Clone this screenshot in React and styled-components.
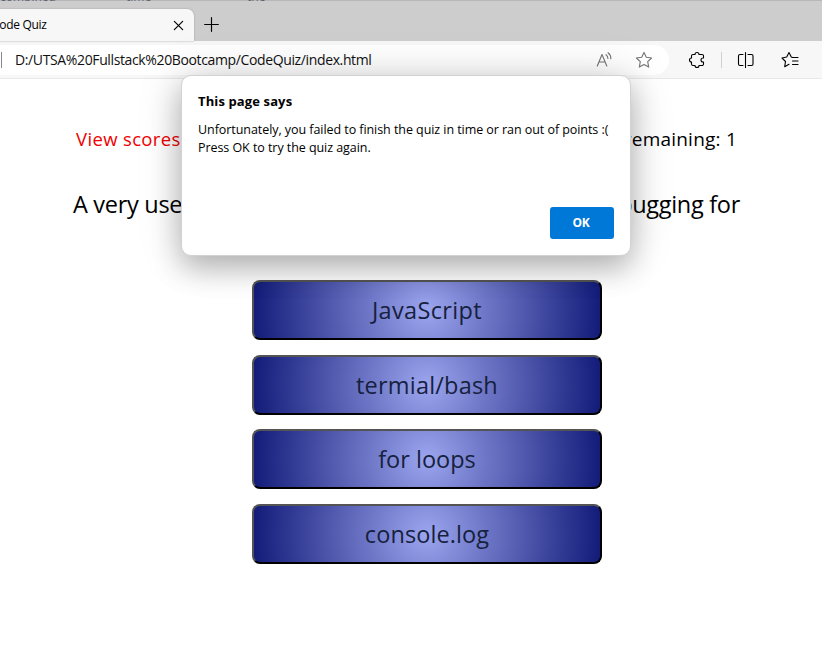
import React from "react";
import styled, { createGlobalStyle } from "styled-components";

const Global = createGlobalStyle`
  * { box-sizing: border-box; }
  body { margin: 0; background: #fff; font-family: "Open Sans", "Noto Sans", sans-serif; color: #000; overflow: hidden; }
  button { font-family: inherit; }
`;
const Screen = styled.div`position: relative; width: 822px; height: 656px; overflow: hidden;`;
const TabStrip = styled.div`position: relative; display: flex; height: 41px; padding-top: 9px; background: #cdcdcd; border-top: 1px solid #b7b7b7;`;
const Sliver = styled.span`position: absolute; left: ${(p) => p.$x}px; top: -12px; font-size: 12px; line-height: 16px; color: #5d6370; white-space: nowrap;`;
const Tab = styled.div`display: flex; justify-content: space-between; align-items: center; width: 194px; height: 32px; margin-top: -1px; padding: 0 8px 0 0; background: #f7f7f7; border-radius: 0 7px 0 0; box-shadow: 0 0 2px #999;`;
const TabTitle = styled.span`font-size: 12px; letter-spacing: -0.3px; margin: -1px 0 0 -8px; white-space: nowrap;`;
const NewTab = styled.div`display: flex; align-items: center; margin-left: 10px; height: 28px;`;
const Toolbar = styled.div`display: flex; align-items: center; height: 38px; background: #f7f7f7; border-bottom: 1px solid #e8e8e8;`;
const AddressBar = styled.div`display: flex; align-items: center; width: 669px; height: 30px; background: #fff; border-radius: 0 15px 15px 0; color: #757575;`;
const Divider = styled.i`width: 1px; height: 16px; background: ${(p) => p.$color};`;
const UrlDivider = styled(Divider)`margin-left: 1px;`;
const Url = styled.span`margin-left: 13px; flex: 1; color: #111; font-size: 14px; letter-spacing: -0.37px; white-space: nowrap;`;
const AddressIcons = styled.div`display: flex; gap: 21px; margin-right: 16px;`;
const Tools = styled.div`display: flex; align-items: center; margin-left: 19px;`;
const ToolIcon = styled.span`display: flex; margin-left: ${(p) => p.$gap || 0}px;`;
const Page = styled.main`display: flex; flex-direction: column; height: 577px;`;
const StatusRow = styled.header`display: flex; justify-content: space-between; padding: 47px 85px 0 76px; font-size: 19px; line-height: 26px; white-space: nowrap;`;
const Scores = styled.span`color: #f00000; font-size: 18.5px; letter-spacing: 0.35px;`;
const Timer = styled.span`letter-spacing: 0.22px;`;
const Question = styled.h1`display: flex; justify-content: space-between; margin: 35px 82px 0 73px; font-size: 23.5px; line-height: 34px; font-weight: 400; white-space: nowrap; letter-spacing: -0.3px;`;
const Answers = styled.div`display: flex; flex-direction: column; gap: 14.7px; width: 350px; margin: 59px 0 0 252px;`;
const Answer = styled.button`height: 60px; padding: 0; border: 2px outset #000; border-radius: 8px; background: radial-gradient(circle, #9ca5ee, #121b78); font-size: 23.5px; color: #16213e; letter-spacing: ${(p) => p.$track}px;`;
const Dialog = styled.section`position: absolute; left: 181px; top: 75px; display: flex; flex-direction: column; width: 450px; height: 181px; padding: 15px 16px 16px; border: 1px solid #d2d2d2; border-radius: 10px; background: #fff; box-shadow: 0 13px 29px rgba(0,0,0,.24), 0 0 46px rgba(0,0,0,.15);`;
const DialogTitle = styled.h2`margin: 0 0 10px; font-size: 13px; line-height: 20px; font-weight: 700; letter-spacing: 0.12px;`;
const Line = styled.p`margin: 0; font-size: 12.5px; line-height: 18px; white-space: nowrap; letter-spacing: -0.06px;`;
const OkButton = styled.button`margin: auto 0 0 auto; width: 64px; height: 32px; padding: 0 2px 1px 0; border: 0; border-radius: 3px; background: #0078d7; color: #fff; font-size: 12px; font-weight: 700; letter-spacing: -0.3px;`;

const Icon = ({ size = 18, children }) => (
  <svg width={size} height={size} viewBox="0 0 18 18" fill="none" stroke="currentColor" strokeWidth="1.1" strokeLinecap="round" strokeLinejoin="round">{children}</svg>
);
const answers = [["JavaScript", 0.35], ["termial/bash", 0.2], ["for loops", 0], ["console.log", 0.1]];

export default function App() {
  return (
    <Screen>
      <Global />
      <TabStrip>
        <Sliver $x={0}>combined</Sliver><Sliver $x={126}>time</Sliver><Sliver $x={247}>the</Sliver>
        <Tab><TabTitle>Code Quiz</TabTitle><Icon size={15}><path d="M4 4l10 10M14 4L4 14" strokeWidth="1.4" /></Icon></Tab>
        <NewTab><Icon size={15}><path d="M9 .8v16.4M.8 9h16.4" strokeWidth="1.4" /></Icon></NewTab>
      </TabStrip>
      <Toolbar>
        <AddressBar>
          <UrlDivider $color="#888" />
          <Url>D:/UTSA%20Fullstack%20Bootcamp/CodeQuiz/index.html</Url>
          <AddressIcons>
            <Icon><path d="M1.300 15L6 3.500 10.800 15M3 11h6M10 3.700q2 1.600 1.900 3.800M12 1.800q3 2.200 2.800 6" /></Icon>
            <Icon><path d="M9 1.400l2.300 4.900 5.300.700-3.900 3.700 1 5.400L9 13.500l-4.700 2.600 1-5.400L1.400 7l5.300-.700z" /></Icon>
          </AddressIcons>
        </AddressBar>
        <Tools>
          <ToolIcon><Icon><path d="M5 3.500h2a2 2 0 0 1 4 0h3a1.500 1.500 0 0 1 1.500 1.500v2H15a2 2 0 0 0 0 4h.5v2a1.500 1.500 0 0 1-1.500 1.500h-3a2 2 0 0 1-4 0H5A1.500 1.500 0 0 1 3.500 13v-2a2 2 0 0 1 0-4V5A1.500 1.500 0 0 1 5 3.500z" /></Icon></ToolIcon>
          <ToolIcon $gap={15}><Divider $color="#d0d0d0" /></ToolIcon>
          <ToolIcon $gap={15}><Icon><path d="M8.500 1.500v15M6 3.500H3a1.500 1.500 0 0 0-1.500 1.500v8A1.500 1.500 0 0 0 3 14.500h3M11 3.500h3.500A1.500 1.500 0 0 1 16 5v8a1.500 1.500 0 0 1-1.500 1.500H11" /></Icon></ToolIcon>
          <ToolIcon $gap={26}><Icon><path d="M11.500 6.500L10.300 6 8 1.500 5.700 6 1 7l3.500 3.500-.8 5.200L8 13.300M11.500 6.500h5.500M11.500 10h5.500M11.500 13.500h5.500" /></Icon></ToolIcon>
        </Tools>
      </Toolbar>
      <Page>
        <StatusRow><Scores>View scores</Scores><Timer>Time remaining: 1</Timer></StatusRow>
        <Question><span>A very use</span><span>bugging for</span></Question>
        <Answers>{answers.map(([label, track]) => <Answer key={label} $track={track}>{label}</Answer>)}</Answers>
      </Page>
      <Dialog>
        <DialogTitle>This page says</DialogTitle>
        <Line>Unfortunately, you failed to finish the quiz in time or ran out of points :(</Line>
        <Line>Press OK to try the quiz again.</Line>
        <OkButton>OK</OkButton>
      </Dialog>
    </Screen>
  );
}
